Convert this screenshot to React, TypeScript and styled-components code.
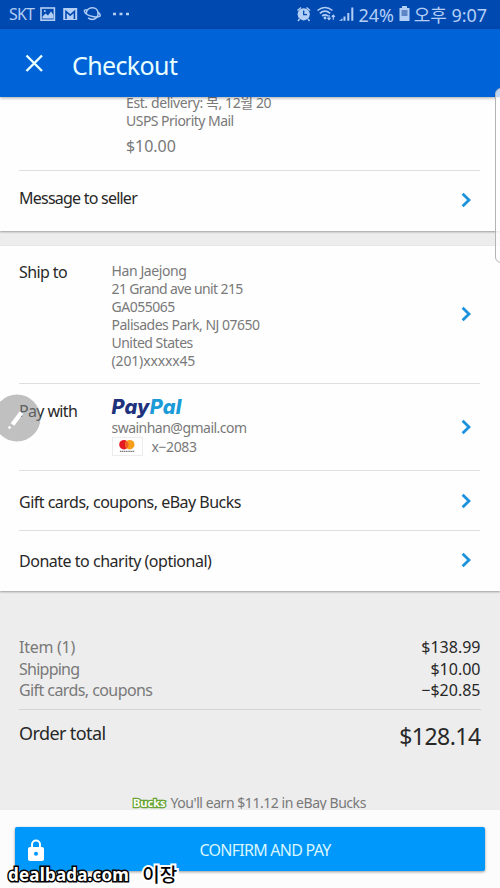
import React from 'react';
import styled, { createGlobalStyle } from 'styled-components';

const Global = createGlobalStyle`
  * { box-sizing: border-box; }
  body { margin: 0; background: #ededed; }
`;

const Screen = styled.div`
  position: relative;
  display: flex;
  flex-direction: column;
  width: 500px;
  height: 888px;
  overflow: hidden;
  background: #ededed;
  font-family: 'Noto Sans', 'Noto Sans CJK KR', sans-serif;
  white-space: nowrap;
`;

const Label = styled.div<{ $size?: number; $lh?: number; $ls?: number; $color?: string }>`
  font-size: ${(p) => p.$size ?? 16}px;
  line-height: ${(p) => p.$lh ?? 22}px;
  letter-spacing: ${(p) => p.$ls ?? 0}px;
  color: ${(p) => p.$color ?? '#282828'};
`;

const Muted = styled(Label).attrs({ $color: '#797979' })``;
const Small = styled(Muted).attrs({ $size: 14, $lh: 18 })``;

const StatusBar = styled.div`
  display: flex;
  flex: none;
  justify-content: space-between;
  height: 29px;
  padding: 0 13px 0 9px;
  background: #0049b0;
`;

const StatusGroup = styled.div`
  display: flex;
  align-items: flex-start;
  height: 29px;
`;

const StatusText = styled(Label).attrs({ $color: '#b3cff6' })`
  padding-top: 4px;
`;

const StatusIcon = styled.svg<{ $gap: number }>`
  display: block;
  flex: none;
  margin-left: ${(p) => p.$gap}px;
`;

const Clock = styled(StatusText)`
  margin-left: 4px;
`;

const AppBar = styled.header`
  position: relative;
  z-index: 1;
  display: flex;
  flex: none;
  align-items: center;
  height: 68px;
  padding: 0 25px;
  background: #0064d8;
  box-shadow: 0 1px 3px rgba(0, 0, 0, 0.35);
`;

const Title = styled(Label).attrs({ $size: 25, $lh: 34, $color: '#e9ffff' })`
  margin: 4px 0 0 28px;
`;

const Card = styled.section`
  flex: none;
  padding: 0 20px 0 19px;
  background: #fefefe;
  box-shadow: 0 1px 2px rgba(0, 0, 0, 0.35);
`;

const Delivery = styled.div`
  height: 76px;
  margin-top: -3px;
  padding-left: 107px;
`;

const Price = styled(Muted)`
  margin-top: 5px;
`;

const Row = styled.div<{ $h: number; $top: number }>`
  display: grid;
  grid-template-columns: minmax(92.5px, auto) 1fr 10px;
  height: ${(p) => p.$h}px;
  padding-top: ${(p) => p.$top}px;
  padding-right: 9px;
  border-top: 1px solid #dedede;

  &:first-child {
    border-top: 0;
  }
`;

const Arrow = styled.svg<{ $drop: number }>`
  display: block;
  margin-top: ${(p) => p.$drop}px;
`;

const Spacer = styled.div`
  flex: none;
  height: 15px;
`;

const Details = styled.div<{ $shift?: number }>`
  margin-top: ${(p) => p.$shift ?? 0}px;
`;

const PayPalMark = styled.div`
  height: 21px;
  font: italic 800 20px/19px Inter, sans-serif;
  font-feature-settings: 'cv11', 'ss03';
  letter-spacing: 0.2px;
  color: #20327c;

  span {
    color: #1a9bd8;
  }
`;

const CardLine = styled.div`
  display: flex;
  align-items: center;
  gap: 9px;
  height: 19px;
`;

const CardBrand = styled.svg`
  display: block;
  border: 1px solid #ececec;
`;

const Summary = styled.section`
  flex: none;
  height: 219px;
  padding: 45px 19.5px 0 19px;
`;

const SummaryRow = styled.div`
  display: flex;
  justify-content: space-between;
  height: 21.5px;
`;

const TotalRow = styled.div`
  display: flex;
  justify-content: space-between;
  height: 85px;
  margin-top: 8px;
  padding-top: 12px;
  border-top: 1px solid #d5d5d5;
`;

const Total = styled(Label).attrs({ $size: 23, $lh: 30, $ls: -0.55 })`
  margin-top: -1px;
`;

const Earn = styled.div`
  display: flex;
  gap: 5px;
  height: 18px;
  padding-left: 114px;
`;

const Bucks = styled.div`
  font: 700 11px/17px 'Noto Sans', sans-serif;
  letter-spacing: 0;
  color: #fff;
  -webkit-text-stroke: 2.6px #68a334;
  paint-order: stroke fill;
`;

const Footer = styled.footer`
  position: relative;
  flex: 1;
  padding: 17px 15px;
  background: #fcfcfc;
`;

const PayButton = styled.button`
  display: grid;
  grid-template-columns: 18px 1fr;
  align-items: center;
  width: 100%;
  height: 44px;
  padding: 1px 0 0 12px;
  border: 0;
  border-radius: 2px;
  background: #0098fb;
  box-shadow: 0 1px 3px rgba(0, 0, 0, 0.4);
  font-family: inherit;
  text-align: center;
`;

const EdgeHandle = styled.div`
  position: absolute;
  z-index: 2;
  top: 88px;
  left: 495px;
  width: 12px;
  height: 175px;
  border: 1px solid #b4b4b4;
  border-radius: 6px;
  background: rgba(255, 255, 255, 0.75);
`;

const PenBubble = styled.svg`
  position: absolute;
  z-index: 2;
  top: 394px;
  left: -7px;
`;

const Watermark = styled.div`
  position: absolute;
  z-index: 2;
  top: 863px;
  left: 8px;
  display: flex;
  gap: 13px;
  font: 700 17px/24px 'Noto Sans', 'Noto Sans CJK KR', sans-serif;
  letter-spacing: 0.2px;
  color: #fff;
  paint-order: stroke fill;
  -webkit-text-stroke: 3px #000;
`;

const Author = styled.span`
  font-weight: 500;
  font-size: 19px;
  color: #000;
  -webkit-text-stroke: 4px #fff;
`;

function Chevron({ drop }: { drop: number }) {
  return (
    <Arrow $drop={drop} width="10" height="16" viewBox="0 0 10 16" fill="none" stroke="#1d92dc" strokeWidth="2.8">
      <path d="M1.6 1.8 8 8l-6.400 6.200" />
    </Arrow>
  );
}

const address = [
  { text: 'Han Jaejong', ls: -0.4 },
  { text: '21 Grand ave unit 215', ls: -0.62 },
  { text: 'GA055065', ls: -0.5 },
  { text: 'Palisades Park, NJ 07650', ls: -0.5 },
  { text: 'United States', ls: -0.52 },
  { text: '(201)xxxxx45', ls: -0.15 },
];

const charges = [
  { name: 'Item (1)', ls: -0.26, amount: '$138.99' },
  { name: 'Shipping', ls: -0.75, amount: '$10.00' },
  { name: 'Gift cards, coupons', ls: -0.58, amount: '−$20.85' },
];

export default function App() {
  return (
    <Screen>
      <Global />
      <StatusBar>
        <StatusGroup>
          <StatusText $size={16} $lh={20} $ls={-0.8}>SKT</StatusText>
          <StatusIcon $gap={6} width="90" height="29" viewBox="40 0 90 29" fill="none" stroke="#b3cff6">
            <rect x="41" y="8" width="13.4" height="12.2" strokeWidth="1.6" />
            <path d="M42.5 18.5v-2l3-3 2.5 2 3-4 2.5 3.5v3.5z" fill="#b3cff6" stroke="none" />
            <circle cx="44.8" cy="11" r="1" fill="#b3cff6" stroke="none" />
            <path d="M63.2 8h14v12h-14z" fill="#b3cff6" stroke="none" />
            <path d="M66 19v-7.500l4.200 3.700 4.200-3.700V19" stroke="#0049b0" strokeWidth="1.6" />
            <path d="M86.300 13.500c0-3.500 2.800-5.800 6-5.800 3.300 0 5.800 2.300 5.800 6 0 3.300-2.600 5.800-5.800 5.800-1.800 0-3.200-.600-4.200-1.700" strokeWidth="1.5" />
            <path d="M86.800 9.800c-1.800-.200-2.800.400-2.400 1.600.800 2.200 5 4.500 9.500 5.300 3.600.6 6.500.2 6.400-1.400-.1-1.100-.900-2.100-2.200-2.900" strokeWidth="1.4" />
            <path d="M113 14h3M119.500 14h3M126 14h3" strokeWidth="2.4" />
          </StatusIcon>
        </StatusGroup>
        <StatusGroup>
          <StatusIcon $gap={0} width="62" height="29" viewBox="297 0 62 29" fill="none" stroke="#b3cff6">
            <circle cx="303.7" cy="14.3" r="6.1" fill="#b3cff6" stroke="none" />
            <path d="M297.500 10.500l3.500-3M310 10.500l-3.500-3M299.500 19l-1.500 2M308 19l1.500 2" strokeWidth="1.5" />
            <path d="M303.700 10.500v4.200h3.300" stroke="#0049b0" strokeWidth="1.3" />
            <path d="M317.500 10.500q7.500-6 15 0M319.800 13.300q5.200-4.200 10.400 0M322.100 16q2.900-2.200 5.800 0" strokeWidth="1.6" />
            <circle cx="325" cy="18" r="1.4" fill="#b3cff6" stroke="none" />
            <path d="M329 15v4.500m-1.600-1.600 1.600 1.700 1.600-1.700M333.300 19.800v-4.600m-1.600 1.600 1.600-1.700 1.600 1.700" strokeWidth="1.2" />
            <path d="M339 20.800l3.500-2.500v2.500zM343.500 16.500h2v4.300h-2zM347.300 13h2v7.800h-2zM351.300 7.500h2v13.300h-2z" fill="#b3cff6" stroke="none" />
          </StatusIcon>
          <StatusText $size={18} $lh={22} $ls={-0.1}>24%</StatusText>
          <StatusIcon $gap={5} width="11" height="29" viewBox="0 0 11 29">
            <path d="M3 6h5v2h2.500v13H.5V8H3z" fill="#b3cff6" />
            <path d="M2.500 10h6v6h-6z" fill="#5e86c6" />
          </StatusIcon>
          <Clock $size={18} $lh={22} $ls={-0.05}>오후 9:07</Clock>
        </StatusGroup>
      </StatusBar>

      <AppBar>
        <svg width="19" height="19" viewBox="0 0 19 19" fill="none" stroke="#e9ffff" strokeWidth="2.4">
          <path d="M1.500 1.500l15.500 15.500M17 1.500 1.500 17" />
        </svg>
        <Title $ls={-0.62}>Checkout</Title>
      </AppBar>

      <Card>
        <Delivery>
          <Small $ls={-0.4}>Est. delivery: 목, 12월 20</Small>
          <Small $ls={-0.52}>USPS Priority Mail</Small>
          <Price $ls={-0.05}>$10.00</Price>
        </Delivery>
        <Row $h={61} $top={16}>
          <Label $ls={-0.77}>Message to seller</Label>
          <span />
          <Chevron drop={5} />
        </Row>
      </Card>

      <Spacer />

      <Card>
        <Row $h={137} $top={15}>
          <Label $ls={-0.6}>Ship to</Label>
          <Details $shift={0.6}>
            {address.map((line) => (
              <Small key={line.text} $ls={line.ls}>{line.text}</Small>
            ))}
          </Details>
          <Chevron drop={45} />
        </Row>
        <Row $h={87} $top={16}>
          <Label $ls={-0.65}>Pay with</Label>
          <Details $shift={-2}>
            <PayPalMark>Pay<span>Pal</span></PayPalMark>
            <Small $ls={-0.52}>swainhan@gmail.com</Small>
            <CardLine>
              <CardBrand width="31" height="19" viewBox="0 0 31 19">
                <circle cx="11.5" cy="7.500" r="5.3" fill="#e51b24" />
                <circle cx="18" cy="7.500" r="5.3" fill="#f79e1b" />
                <path d="M14.750 3.300a5.300 5.300 0 0 1 0 8.400 5.300 5.300 0 0 1 0-8.400" fill="#f26322" />
                <path d="M7 15h16" stroke="#777" strokeWidth="1.4" strokeDasharray="1.5 .6" />
              </CardBrand>
              <Small $ls={-0.4}>x−2083</Small>
            </CardLine>
          </Details>
          <Chevron drop={19} />
        </Row>
        <Row $h={60} $top={20}>
          <Label $ls={-0.51}>Gift cards, coupons, eBay Bucks</Label>
          <span />
          <Chevron drop={2} />
        </Row>
        <Row $h={61} $top={19}>
          <Label $ls={-0.48}>Donate to charity (optional)</Label>
          <span />
          <Chevron drop={2} />
        </Row>
      </Card>

      <Summary>
        {charges.map((c) => (
          <SummaryRow key={c.name}>
            <Muted $ls={c.ls}>{c.name}</Muted>
            <Label>{c.amount}</Label>
          </SummaryRow>
        ))}
        <TotalRow>
          <Label $size={18} $ls={-0.6}>Order total</Label>
          <Total>$128.14</Total>
        </TotalRow>
        <Earn>
          <Bucks>Bucks</Bucks>
          <Small $ls={-0.45}>You'll earn $11.12 in eBay Bucks</Small>
        </Earn>
      </Summary>

      <Footer>
        <PayButton>
          <svg width="18" height="24" viewBox="0 0 18 24">
            <path d="M5 10V6.500a4 4 0 0 1 8 0V10" fill="none" stroke="#fff" strokeWidth="2" />
            <rect x="1" y="9" width="16" height="14" rx="2" fill="#fff" />
            <circle cx="9" cy="15.800" r="2" fill="#0098fb" />
          </svg>
          <Label $ls={-0.75} $color="#d9f6ff">CONFIRM AND PAY</Label>
        </PayButton>
      </Footer>

      <EdgeHandle />
      <PenBubble width="48" height="48" viewBox="0 0 48 48">
        <circle cx="24" cy="24" r="23.500" fill="#8c8c8c" fillOpacity=".55" />
        <path d="M19.500 30.500 28.500 18.500" stroke="#fff" strokeWidth="4.5" />
        <path d="M17.300 32.600l-1.500 1.900" stroke="#fff" strokeWidth="2.5" />
      </PenBubble>
      <Watermark>
        dealbada.com<Author>이장</Author>
      </Watermark>
    </Screen>
  );
}
